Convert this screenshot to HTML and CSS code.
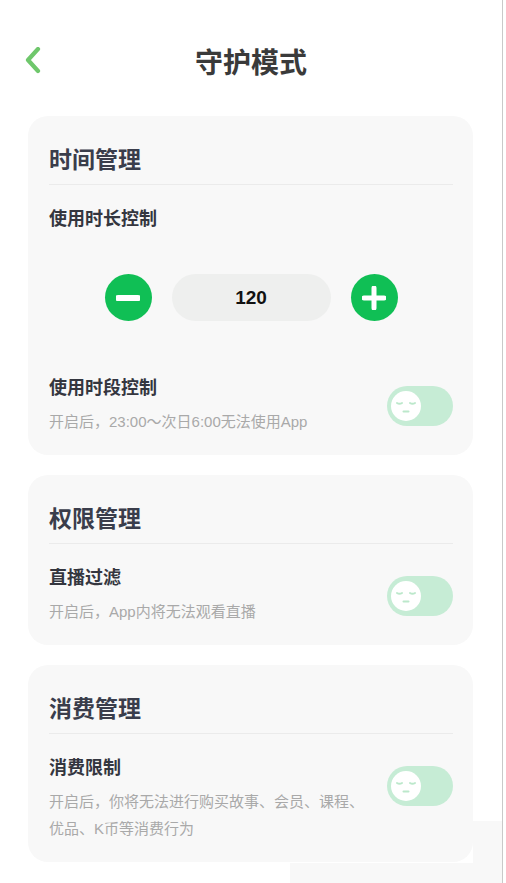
FILE: index.html
```html
<!DOCTYPE html>
<html lang="zh-CN">
<head>
    <meta charset="UTF-8">
    <meta name="viewport" content="width=device-width, initial-scale=1.0">
    <link rel="stylesheet" href="styles.css">
    <title>守护模式</title>
</head>
<body>
    <div class="page">
        <header class="topbar">
            <div class="back">
                <svg width="16" height="28" viewBox="0 0 16 28">
                    <path d="M13 2 L3 13 L13 24" fill="none" stroke="#6fc76c" stroke-width="4.2" stroke-linecap="round" stroke-linejoin="round"/>
                </svg>
            </div>
            <h1>守护模式</h1>
            <div></div>
        </header>

        <section class="card">
            <h2>时间管理</h2>
            <div class="label">使用时长控制</div>
            <div class="stepper">
                <button class="round" type="button">
                    <svg width="24" height="24" viewBox="0 0 24 24"><path d="M2 12 H22" stroke="#fff" stroke-width="6" stroke-linecap="round"/></svg>
                </button>
                <div class="value">120</div>
                <button class="round" type="button">
                    <svg width="24" height="24" viewBox="0 0 24 24"><path d="M2 12 H22 M12 2 V22" stroke="#fff" stroke-width="5" stroke-linecap="round"/></svg>
                </button>
            </div>
            <div class="row">
                <div class="text">
                    <div class="label">使用时段控制</div>
                    <div class="desc">开启后，23:00～次日6:00无法使用App</div>
                </div>
                <div class="toggle"><span class="knob">
                    <svg width="30" height="30" viewBox="0 0 30 30"><path d="M6 12 Q8.5 13.5 11 12 M19 12 Q21.5 13.5 24 12 M12.5 20.5 H17.5" fill="none" stroke="#bce8cb" stroke-width="2" stroke-linecap="round"/></svg>
                </span></div>
            </div>
        </section>

        <section class="card">
            <h2>权限管理</h2>
            <div class="row">
                <div class="text">
                    <div class="label">直播过滤</div>
                    <div class="desc">开启后，App内将无法观看直播</div>
                </div>
                <div class="toggle"><span class="knob">
                    <svg width="30" height="30" viewBox="0 0 30 30"><path d="M6 12 Q8.5 13.5 11 12 M19 12 Q21.5 13.5 24 12 M12.5 20.5 H17.5" fill="none" stroke="#bce8cb" stroke-width="2" stroke-linecap="round"/></svg>
                </span></div>
            </div>
        </section>

        <section class="card">
            <h2>消费管理</h2>
            <div class="row">
                <div class="text">
                    <div class="label">消费限制</div>
                    <div class="desc">开启后，你将无法进行购买故事、会员、课程、优品、K币等消费行为</div>
                </div>
                <div class="toggle"><span class="knob">
                    <svg width="30" height="30" viewBox="0 0 30 30"><path d="M6 12 Q8.5 13.5 11 12 M19 12 Q21.5 13.5 24 12 M12.5 20.5 H17.5" fill="none" stroke="#bce8cb" stroke-width="2" stroke-linecap="round"/></svg>
                </span></div>
            </div>
        </section>

        <div class="patch patch-side"></div>
        <div class="patch patch-bottom"></div>
    </div>
</body>
</html>
```

FILE: styles.css
```css
body {
    margin: 0;
    padding: 0;
    background-color: #fff;
    font-family: "Noto Sans CJK SC", "Noto Sans", sans-serif;
    overflow: hidden;
}

.page {
    position: relative;
    width: 502px;
    height: 883px;
    border-right: 1px solid #c9c9c9;
}

.topbar {
    display: grid;
    grid-template-columns: 1fr auto 1fr;
    align-items: center;
    padding-top: 43px;
    height: 36px;
}

.back {
    padding-left: 25px;
    display: flex;
    align-items: center;
}

.topbar h1 {
    margin: 0;
    font-size: 28px;
    line-height: 36px;
    font-weight: 700;
    color: #3a3a3a;
}

.card {
    margin: 37px 29px 20px 28px;
    background-color: #f8f8f8;
    border-radius: 20px;
    padding: 26px 20px 20px 21px;
}

.card + .card {
    margin-top: 0;
}

.card h2 {
    margin: 0 0 20px;
    font-size: 23px;
    line-height: 32px;
    font-weight: 700;
    color: #3a3d4b;
    padding-bottom: 10px;
    border-bottom: 1px solid #ebebeb;
}

.label {
    font-size: 18px;
    line-height: 24px;
    font-weight: 700;
    color: #34363f;
}

.stepper {
    display: flex;
    justify-content: center;
    align-items: center;
    gap: 20px;
    margin: 45px 0 53px;
}

.round {
    width: 47px;
    height: 47px;
    border-radius: 50%;
    border: none;
    padding: 0;
    background-color: #10bf55;
    display: flex;
    align-items: center;
    justify-content: center;
}

.value {
    width: 159px;
    height: 47px;
    border-radius: 24px;
    background-color: #eeefee;
    display: flex;
    align-items: center;
    justify-content: center;
    font-family: "Liberation Sans", Arial, sans-serif;
    font-weight: 700;
    font-size: 19px;
    color: #111;
}

.row {
    display: flex;
    align-items: flex-start;
    gap: 12px;
}

.text {
    flex: 1;
}

.desc {
    margin-top: 10px;
    font-family: "Liberation Sans", "Noto Sans CJK SC", sans-serif;
    font-size: 15px;
    line-height: 27px;
    color: #a9a9a9;
}

.toggle {
    flex: none;
    margin-top: 12px;
    width: 66px;
    height: 40px;
    border-radius: 20px;
    background-color: #c6ecd5;
    display: flex;
    align-items: center;
    padding-left: 4px;
    box-sizing: border-box;
}

.knob {
    width: 30px;
    height: 30px;
    border-radius: 50%;
    background-color: #fff;
    display: block;
}

.knob svg {
    display: block;
}

.patch {
    position: absolute;
    background-color: #f8f8f8;
}

.patch-side {
    left: 473px;
    top: 821px;
    width: 29px;
    height: 62px;
}

.patch-bottom {
    left: 290px;
    top: 863px;
    width: 212px;
    height: 20px;
}
```
